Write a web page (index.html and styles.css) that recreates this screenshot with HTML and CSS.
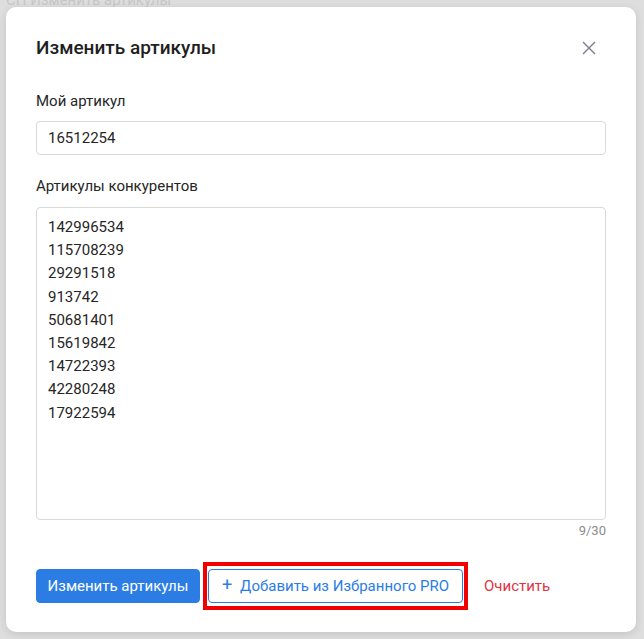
FILE: index.html
```html
<!DOCTYPE html>
<html lang="ru">
<head>
<meta charset="utf-8">
<link rel="stylesheet" href="styles.css">
</head>
<body>
<div class="bg-title">СП Изменить артикулы</div>
<div class="modal">
  <div class="modal-head">
    <h2 class="modal-title">Изменить артикулы</h2>
    <button class="close" aria-label="Закрыть">
      <svg width="14" height="14" viewBox="0 0 14 14"><path d="M1 1L13 13M13 1L1 13" stroke="#7a7d8c" stroke-width="1.4" fill="none"/></svg>
    </button>
  </div>
  <div class="field">
    <label class="label">Мой артикул</label>
    <div class="input">16512254</div>
  </div>
  <div class="field field2">
    <label class="label">Артикулы конкурентов</label>
    <div class="textarea">
      <div>142996534</div>
      <div>115708239</div>
      <div>29291518</div>
      <div>913742</div>
      <div>50681401</div>
      <div>15619842</div>
      <div>14722393</div>
      <div>42280248</div>
      <div>17922594</div>
    </div>
    <div class="counter">9/30</div>
  </div>
  <div class="actions">
    <button class="btn btn-primary">Изменить артикулы</button>
    <div class="highlight">
      <button class="btn btn-outline"><span class="plus">+</span>Добавить из Избранного PRO</button>
    </div>
    <button class="btn btn-text">Очистить</button>
  </div>
</div>
</body>
</html>
```
FILE: styles.css
```css
* { box-sizing: border-box; }
html, body { margin: 0; padding: 0; }
body {
  background: #dedede;
  font-family: Roboto, "Liberation Sans", Arial, sans-serif;
  color: #222;
  width: 644px;
  height: 639px;
  overflow: hidden;
  position: relative;
}
.bg-title {
  position: absolute;
  left: 6px;
  top: -10px;
  font-size: 15px;
  line-height: 20px;
  color: #c8c8c8;
}
.modal {
  position: absolute;
  left: 6px;
  top: 7px;
  width: 630px;
  height: 625px;
  background: #fff;
  border-radius: 10px;
  box-shadow: 0 2px 8px rgba(0,0,0,0.12);
  padding: 29px 30px 0 30px;
}
.modal-head {
  display: flex;
  align-items: center;
  justify-content: space-between;
  height: 24px;
}
.modal-title {
  margin: 0;
  font-size: 19px;
  font-weight: 500;
  line-height: 24px;
  color: #1f1f1f;
}
.close {
  border: 0;
  background: none;
  padding: 0;
  margin-right: 10px;
  width: 14px;
  height: 14px;
  display: flex;
}
.field { margin-top: 31px; display: flex; flex-direction: column; }
.field2 { margin-top: 21px; }
.label {
  font-size: 15px;
  line-height: 20px;
  color: #262626;
}
.input {
  margin-top: 10px;
  height: 34px;
  border: 1px solid #d9d9d9;
  border-radius: 4px;
  padding: 0 11px;
  font-size: 15px;
  line-height: 32px;
  color: #262626;
}
.textarea {
  margin-top: 11px;
  height: 313px;
  border: 1px solid #d9d9d9;
  border-radius: 4px;
  padding: 8px 11px;
  font-size: 15px;
  line-height: 23.2px;
  color: #262626;
}
.counter {
  margin-top: 3px;
  text-align: right;
  font-size: 13px;
  line-height: 16px;
  color: #8c8c8c;
}
.actions {
  margin-top: 23px;
  display: flex;
  align-items: center;
  gap: 3px;
}
.btn {
  font-family: inherit;
  font-size: 15px;
  height: 34px;
  border-radius: 4px;
  padding: 0 12px;
  cursor: pointer;
  display: flex;
  align-items: center;
  white-space: nowrap;
}
.btn-primary {
  background: #2b7de3;
  color: #fff;
  border: 1px solid #2b7de3;
  width: 164px;
  justify-content: center;
}
.highlight {
  border: 4px solid #f00000;
  padding: 3px 1px;
}
.btn-outline {
  background: #fff;
  color: #2b7de3;
  border: 1px solid #2b7de3;
  width: 255px;
  justify-content: center;
}
.plus {
  font-size: 18px;
  margin-right: 8px;
  line-height: 1;
  position: relative;
  top: -1px;
}
.btn-text {
  background: none;
  border: 0;
  color: #e0343f;
  margin-left: 1px;
}
```
